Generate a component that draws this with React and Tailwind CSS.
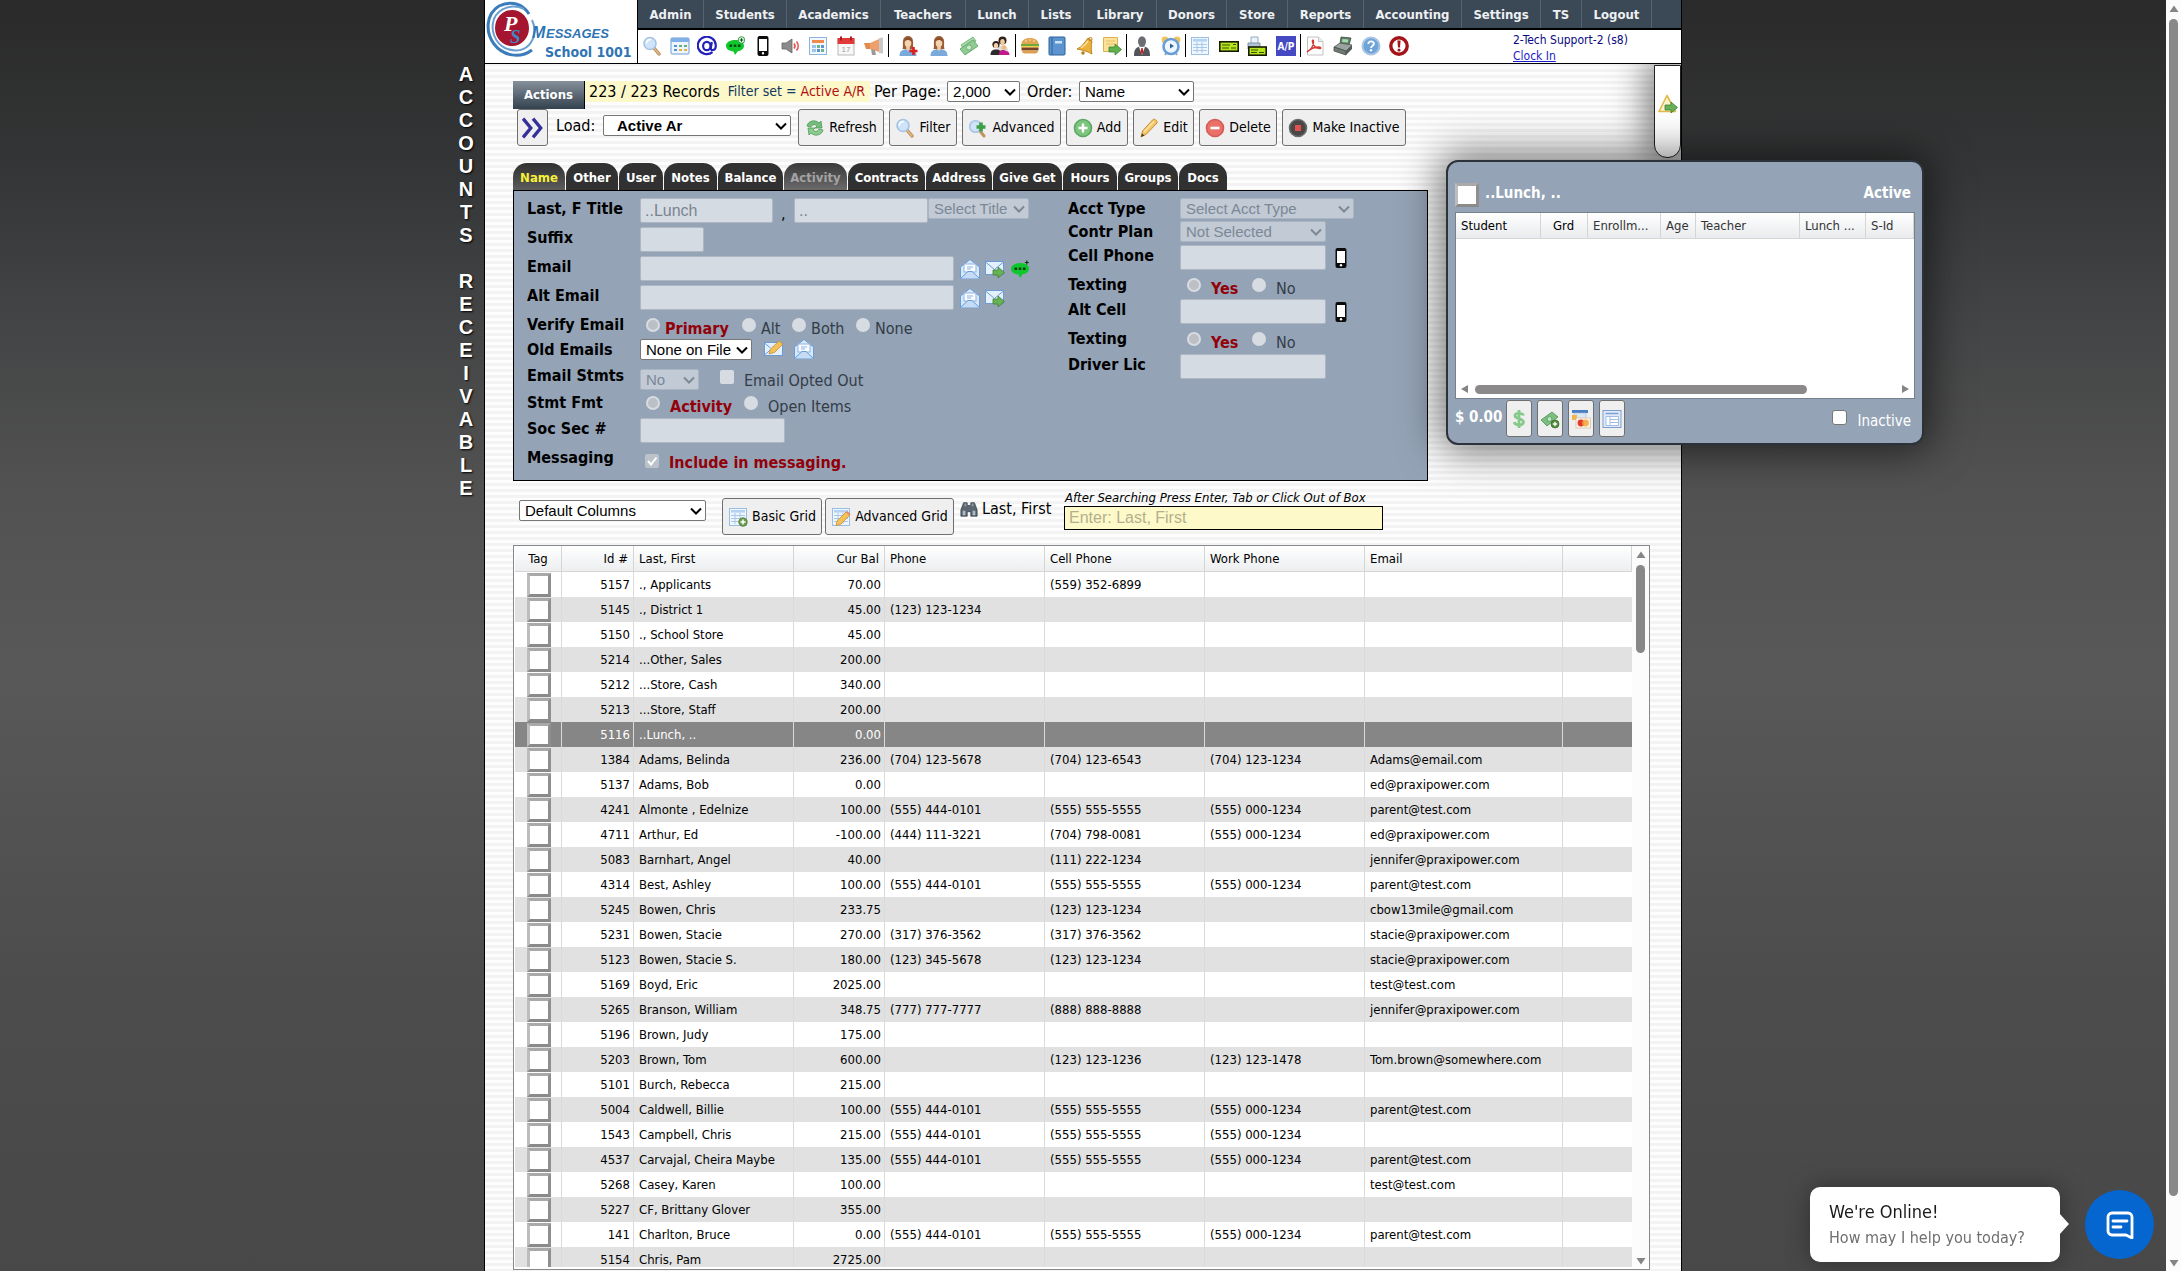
import React from "react";

const FONT = "font-['DejaVu_Sans_Condensed','Open_Sans',sans-serif]";
const ARIAL = "font-['Liberation_Sans',Arial,sans-serif]";

/* ---------- icons, all on a 20 x 20 grid ---------- */
function Ico({ children, className = "size-5" }) {
  return (
    <svg viewBox="0 0 20 20" className={"shrink-0 " + className} aria-hidden="true">
      {children}
    </svg>
  );
}
const Magnifier = (p) => (
  <Ico {...p}>
    <path d="M12 12l5 6" stroke="#b98a56" strokeWidth="3.4" strokeLinecap="round" />
    <path d="M12 12l5 6" stroke="#e0bd8c" strokeWidth="1.4" strokeLinecap="round" />
    <circle cx="8" cy="7.5" r="6" fill="#cfe4f8" stroke="#a6c3e4" strokeWidth="1.6" />
    <path d="M4.5 7a4 4 0 0 1 4-3.5" stroke="#fff" strokeWidth="1.6" fill="none" strokeLinecap="round" />
  </Ico>
);
const Calc = () => (
  <Ico>
    <rect x="1" y="2" width="18" height="16" rx="1" fill="#eef5fd" stroke="#6d9bd4" />
    <rect x="1" y="2" width="18" height="4" fill="#7fb0e6" />
    <path d="M4 9h3v2H4zM4 13h3v2H4z" fill="#4e93d9" />
    <path d="M9 9h3v2H9zM14 9h3v2h-3z" fill="#62b07a" />
    <path d="M9 13h3v2H9zM14 13h3v2h-3z" fill="#e6b04b" />
  </Ico>
);
const At = () => (
  <Ico>
    <path d="M15.5 16.2A9 8.7 0 1 1 18.8 9.5c0 3-1.4 4.6-3.2 4.6-1.600 0-2-1-1.700-2.600L14.800 6" fill="none" stroke="#2222b8" strokeWidth="2.200" />
    <ellipse cx="9.800" cy="10" rx="3.700" ry="4.200" fill="none" stroke="#2222b8" strokeWidth="2.200" />
  </Ico>
);
const ChatPlus = () => (
  <Ico>
    <path d="M10 4c5 0 9 2.200 9 5.700s-3.400 5-6 5.400L10 19l-1.500-3.600C4 15 1 13 1 9.700S5 4 10 4z" fill="#10c82c" />
    <path d="M4.500 8.500h2.600v2.600H4.500zM8.700 8.500h2.600v2.600H8.700zM12.900 8.500h2.600v2.600h-2.600z" fill="#064a10" />
    <circle cx="16.500" cy="4" r="3.300" fill="#d9f3dd" stroke="#128a27" strokeWidth=".8" />
    <path d="M16.500 2.300v3.400M14.800 4h3.400" stroke="#064a10" />
  </Ico>
);
const ChatDark = () => (
  <Ico>
    <path d="M10 4c5 0 9 2.200 9 5.700s-3.400 5-6 5.400L10 19l-1.500-3.600C4 15 1 13 1 9.700S5 4 10 4z" fill="#0fc62c" />
    <path d="M4.500 8.500h2.600v2.600H4.500zM8.700 8.500h2.600v2.600H8.700zM12.900 8.500h2.600v2.600h-2.600z" fill="#063d0e" />
    <path d="M16.800 1.500v4M14.800 3.500h4" stroke="#0b3b12" strokeWidth="1.200" />
  </Ico>
);
const Phone = (p) => (
  <Ico {...p}>
    <rect x="4.500" y="0" width="11" height="20" rx="2" fill="#0b0b0b" />
    <rect x="6" y="3" width="8" height="12" fill="#fff" />
    <circle cx="10" cy="17.300" r="1.200" fill="#fff" />
  </Ico>
);
const Speaker = () => (
  <Ico>
    <path d="M1 7h4l6-4v14l-6-4H1z" fill="#8b8b8b" stroke="#666" strokeWidth=".8" />
    <path d="M13 7.500a4 4 0 0 1 0 5M15.500 5.500a7 7 0 0 1 0 9" stroke="#e45555" strokeWidth="1.700" fill="none" />
  </Ico>
);
const CalSheet = () => (
  <Ico>
    <rect x="1.500" y="1.500" width="17" height="17" fill="#f2f8ff" stroke="#8db4de" />
    <rect x="4" y="4" width="12" height="3" fill="#f08a4b" />
    <path d="M4 9h4v3H4zM4 13h4v3H4z" fill="#9cc3ec" />
    <path d="M9 9h3v3H9zM13 13h3v3h-3z" fill="#6cb48c" />
    <path d="M13 9h3v3h-3zM9 13h3v3H9z" fill="#5c92cf" />
  </Ico>
);
const CalRed = () => (
  <Ico>
    <rect x="2" y="3" width="16" height="16" fill="#f7f7f7" stroke="#b9b9b9" />
    <rect x="1.500" y="2" width="17" height="6" fill="#e03a3a" />
    <path d="M5 .5v4M15 .5v4" stroke="#a51f1f" strokeWidth="2" />
    <text x="10" y="16" fontSize="8" textAnchor="middle" fill="#a2a2a2" fontFamily="Liberation Sans">17</text>
  </Ico>
);
const Megaphone = () => (
  <Ico>
    <path d="M0 7h6v6H2z" fill="#e38b4d" />
    <path d="M6 7l9-4v13l-9-3z" fill="#eda06c" />
    <path d="M15 2l4-.5v16l-4-.5z" fill="#c9c9c9" />
    <path d="M7 13l1 6h4l-1-5z" fill="#9a9a9a" />
  </Ico>
);
const Woman = ({ plus }) => (
  <Ico>
    <path d="M4.500 13c1-3 0-5 .5-8a5 5 0 0 1 10 0c.5 3-.5 5 .5 8z" fill="#9a5d36" />
    <path d="M1.500 20c0-5 3-7 8.500-7s8.500 2 8.500 7z" fill="#7aa9dc" />
    <path d="M8.200 10h3.600v3.500L10 15l-1.800-1.500z" fill="#f2c9a2" />
    <ellipse cx="10" cy="7" rx="3.300" ry="4" fill="#f6d3b0" />
    <path d="M6.500 6c1-2.500 5-3 7 0l-.3-3.200-3.200-1.300-3.300 1.500z" fill="#8a4f2b" />
    {plus && <path d="M15.500 11v8M11.500 15h8" stroke="#e01d1d" strokeWidth="2.600" />}
  </Ico>
);
const Money = (p) => (
  <Ico {...p}>
    <path d="M2 9l12-8 3 4-12 8z" fill="#a9d9a9" stroke="#5ea868" strokeWidth=".8" />
    <path d="M1 13l13-9 5 6-13 9z" fill="#8fcb93" stroke="#559e60" strokeWidth=".8" />
    <circle cx="10" cy="11.500" r="2.600" fill="#c9ebca" stroke="#559e60" strokeWidth=".7" />
  </Ico>
);
const MoneyPlus = () => (
  <Ico className="size-5">
    <path d="M1 11l11-8 6 5-11 9z" fill="#7bbf80" stroke="#4c8f56" strokeWidth=".8" />
    <circle cx="9.500" cy="10" r="2.400" fill="#c0e6c2" stroke="#4c8f56" strokeWidth=".7" />
    <circle cx="15" cy="15" r="4" fill="#4f8a3a" stroke="#386a28" strokeWidth=".7" />
    <path d="M15 12.800v4.400M12.800 15h4.400" stroke="#fff" strokeWidth="1.300" />
  </Ico>
);
const People = () => (
  <Ico>
    <circle cx="12.500" cy="4.500" r="4" fill="#2d2019" />
    <ellipse cx="12.500" cy="6" rx="2.300" ry="3" fill="#f1caa2" />
    <path d="M7 15c0-4 2-5.500 5.500-5.500S18 11 18 15z" fill="#ddd" />
    <circle cx="6" cy="8.500" r="3.600" fill="#2d2019" />
    <ellipse cx="6" cy="9.800" rx="2.200" ry="2.700" fill="#f4d0aa" />
    <path d="M.5 19c0-4 2-5.500 5.500-5.500s5.500 1.500 5.500 5.500z" fill="#2b2b2b" />
    <path d="M9 19c0-3.500 1-5 4-5 1.500 0 2.500.5 3 1 2 0 3.500 1.500 3.500 4z" fill="#c01a8c" />
    <circle cx="14" cy="11.500" r="2.300" fill="#f1b978" />
  </Ico>
);
const Burger = () => (
  <Ico>
    <path d="M1.500 8c0-4 4-6 8.500-6s8.500 2 8.500 6z" fill="#e2a552" />
    <path d="M5 5h2M9 4h2M13 5h2" stroke="#fbe3b4" />
    <path d="M1 8h18v2H1z" fill="#71a83a" />
    <path d="M1 10h18v1.600H1z" fill="#f3cf4c" />
    <path d="M1.500 11.500h17v3h-17z" fill="#7a4325" />
    <path d="M2 14.500h16c0 2-1 3-3 3H5c-2 0-3-1-3-3z" fill="#dca050" />
  </Ico>
);
const Book = () => (
  <Ico>
    <rect x="2" y="1" width="16" height="18" rx="1" fill="#5b94cf" stroke="#2f629a" />
    <path d="M5 1v18" stroke="#2f629a" />
    <path d="M8 5h7v2.500H8z" fill="#cfe3f7" />
  </Ico>
);
const Bell = () => (
  <Ico>
    <path d="M2 13c5-2 7-6 11-11l4 3c-1 5-1 9 0 13-5-3-10-4-15-5z" fill="#ecb03c" stroke="#b97f19" strokeWidth=".9" />
    <path d="M6 12c3-2 5-4 7-7" stroke="#fbe2a0" strokeWidth="1.500" fill="none" />
    <circle cx="8" cy="17" r="1.800" fill="#b97f19" />
    <circle cx="15.500" cy="3" r="1.600" fill="none" stroke="#b97f19" />
  </Ico>
);
const NoteArrow = () => (
  <Ico>
    <path d="M1.500 1.500h14v14h-14z" fill="#fbe19a" stroke="#deb24c" />
    <path d="M4 5h9M4 8h9" stroke="#e5bf68" />
    <path d="M7 11h6V8l6.500 5.500L13 19v-3H7z" fill="#5fb14d" stroke="#388030" strokeWidth=".8" />
  </Ico>
);
const Man = () => (
  <Ico>
    <path d="M2 20c0-7 2-9.500 8-9.500s8 2.500 8 9.500z" fill="#515459" />
    <path d="M7 11h6l-3 8z" fill="#fff" />
    <path d="M9.300 12h1.400l.8 4-1.500 2.500L8.500 16z" fill="#c52323" />
    <ellipse cx="10" cy="5.500" rx="4" ry="5.200" fill="#6a6d72" />
  </Ico>
);
const Alarm = () => (
  <Ico>
    <circle cx="4" cy="4" r="3.400" fill="#f0c45c" />
    <circle cx="16" cy="4" r="3.400" fill="#f0c45c" />
    <path d="M4 19l2-3M16 19l-2-3" stroke="#8aa5c4" strokeWidth="2" />
    <circle cx="10" cy="10.500" r="7.500" fill="#eef6ff" stroke="#679dd8" strokeWidth="2.600" />
    <path d="M9 7.500v5l4-2.500z" fill="#33608f" />
  </Ico>
);
const Sheet = ({ badge, className }) => (
  <Ico className={className}>
    <rect x="1.500" y="1.500" width="17" height="17" fill="#eef6ff" stroke="#9abde4" />
    <rect x="3" y="3" width="14" height="2.600" fill="#b5d2f2" />
    <path d="M3 8.500h14M3 11.500h14M3 14.500h14M7 6v11M12 6v11" stroke="#a8c7e9" />
    {badge === "plus" && (
      <>
        <circle cx="15" cy="15" r="4.200" fill="#6d9f4e" stroke="#44702c" strokeWidth=".8" />
        <path d="M15 12.500v5M12.500 15h5" stroke="#fff" strokeWidth="1.500" />
      </>
    )}
    {badge === "pencil" && (
      <>
        <path d="M5 18.500l1-4.500 9-9 3.500 3.500-9 9z" fill="#f3c05a" stroke="#cf8f2d" strokeWidth=".8" />
        <path d="M15 5l3.500 3.500 1-1.500-3-3z" fill="#e08a78" />
      </>
    )}
  </Ico>
);
const Check = () => (
  <Ico>
    <rect x=".8" y="5.800" width="18.400" height="9.400" fill="#b4e51d" stroke="#151a05" strokeWidth="1.600" />
    <path d="M3 9h8M3 12h7M12 12h5M14 8.500h3" stroke="#3d5208" strokeWidth="1.200" />
  </Ico>
);
const CheckPrint = () => (
  <Ico>
    <path d="M4 1h7v7H4z" fill="#eef3fa" stroke="#92a8c2" />
    <path d="M1 7h12v6H1z" fill="#b3c2d4" stroke="#8093ab" />
    <rect x="1.800" y="11" width="17.400" height="8.200" fill="#b4e51d" stroke="#151a05" strokeWidth="1.600" />
    <path d="M4 14h7M4 16.500h6M12 16.500h5" stroke="#3d5208" strokeWidth="1.200" />
  </Ico>
);
const AP = () => (
  <Ico>
    <rect width="20" height="20" fill="#4549c4" />
    <text x="10" y="14" fontSize="10" fontWeight="bold" textAnchor="middle" fill="#fff" fontFamily="DejaVu Sans Condensed">A/P</text>
  </Ico>
);
const Pdf = () => (
  <Ico>
    <path d="M2.500 1h11l4.500 4.500V19H2.500z" fill="#fdfdfd" stroke="#c3c3c3" />
    <path d="M13.500 1v4.500H18" fill="#eee" stroke="#c3c3c3" />
    <path d="M2 16c4-2 7-7 6.500-11-.2-1.500-1.500-1-1 1 .8 3.500 3.500 6.500 7.500 6.500 1.500-.2.500-1.500-1-1.500-4 0-9 2-12 5z" fill="none" stroke="#d23a34" strokeWidth="1.400" />
  </Ico>
);
const Cash = () => (
  <Ico>
    <path d="M8 1l10 1-2 7-9-1z" fill="#5d7a66" stroke="#3c4f43" strokeWidth=".8" />
    <path d="M9.500 3l6 .6-.7 3L9 6z" fill="#a7dcb0" />
    <path d="M1 11l6-4 12 2-6 6z" fill="#9aa39d" stroke="#4f5a53" strokeWidth=".8" />
    <path d="M1 11l12 4v4L1 15z" fill="#6f7a74" stroke="#454f49" strokeWidth=".8" />
    <path d="M13 15l6-6v4l-6 6z" fill="#525b56" />
  </Ico>
);
const Help = () => (
  <Ico>
    <circle cx="10" cy="10" r="8.500" fill="#6ea4da" stroke="#a8c4e2" strokeWidth="2" />
    <path d="M7.300 8c0-3.500 5.600-3.300 5.600-.3 0 2-2.800 2-2.800 4.200" stroke="#fff" strokeWidth="1.800" fill="none" />
    <circle cx="10" cy="14.300" r="1.200" fill="#fff" />
  </Ico>
);
const Alert = () => (
  <Ico>
    <circle cx="10" cy="10" r="8.200" fill="#fff" stroke="#a3151b" strokeWidth="3.400" />
    <path d="M8.400 4.500h3.200l-.6 7H9z" fill="#a3151b" />
    <circle cx="10" cy="14" r="1.600" fill="#a3151b" />
  </Ico>
);
const RefreshIco = () => (
  <Ico className="size-5">
    <path d="M2 8c1-5 8-7 12-3l2-2 1 7h-7l2-2c-2-2-5-1.500-6 1z" fill="#74bd7a" stroke="#4c9a56" strokeWidth=".8" />
    <path d="M18 12c-1 5-8 7-12 3l-2 2-1-7h7l-2 2c2 2 5 1.500 6-1z" fill="#8cca8f" stroke="#4c9a56" strokeWidth=".8" />
  </Ico>
);
const AdvIco = () => (
  <Ico className="size-5">
    <path d="M12 13l4 5" stroke="#c1935c" strokeWidth="3" strokeLinecap="round" />
    <circle cx="7.500" cy="8.500" r="5.800" fill="#cfe4f8" stroke="#a6c3e4" strokeWidth="1.500" />
    <path d="M13 4.500v9M8.500 9h9" stroke="#3f9f48" strokeWidth="3.600" />
  </Ico>
);
const Round = ({ fill, edge, children }) => (
  <Ico className="size-5">
    <circle cx="10" cy="10" r="8.500" fill={fill} stroke={edge} strokeWidth="1.600" />
    {children}
  </Ico>
);
const Pencil = () => (
  <Ico className="size-5">
    <path d="M2 19l1.500-6L14 1.500c1.500-1.200 5 1.500 4 3.500L7.500 16z" fill="#f4c565" stroke="#c98f35" />
    <path d="M2 19l1-3.500 2.500 2z" fill="#4a3a20" />
    <path d="M5 14L15 3.500" stroke="#fbe5ae" strokeWidth="1.400" />
  </Ico>
);
const MailOpen = () => (
  <Ico className="size-5">
    <path d="M.5 8L10 .5 19.500 8v11.500H.5z" fill="#d7e8fb" stroke="#6b9cd6" />
    <rect x="4" y="5" width="12" height="8" fill="#f8fbff" stroke="#8fb3dd" />
    <path d="M7 8h6M7 10h4" stroke="#8fb3dd" />
    <path d="M.5 19.500L8 12.500h4l7.500 7" fill="#c5dcf7" stroke="#6b9cd6" />
  </Ico>
);
const MailArrow = () => (
  <Ico className="size-5">
    <rect x=".5" y="2.500" width="18" height="13" fill="#e5f0fd" stroke="#6b9cd6" />
    <path d="M.5 3l9 7.500L18.500 3" fill="none" stroke="#6b9cd6" />
    <path d="M8 11h5V8l6.500 5.500L13 19v-3H8z" fill="#69b157" stroke="#3d8233" strokeWidth=".8" />
  </Ico>
);
const MailPencil = () => (
  <Ico className="size-5">
    <rect x=".5" y="3.500" width="18" height="13" fill="#e5f0fd" stroke="#6b9cd6" />
    <path d="M.5 16l7-6M.5 4l6 5" fill="none" stroke="#6b9cd6" />
    <path d="M5 15l1.500-5L15 2l4 3-8.500 8.500z" fill="#f3c05a" stroke="#c98d33" strokeWidth=".8" />
  </Ico>
);
const Binoculars = () => (
  <Ico className="size-[18px]">
    <path d="M4 3h4v3h4V3h4l3 8v7h-7v-5H8v5H1v-7z" fill="#5b6670" stroke="#2f3840" strokeWidth=".8" />
    <path d="M3 12h3v5H3zM14 12h3v5h-3z" fill="#aebbc7" />
    <path d="M5 4h2v3H5zM13 4h2v3h-2z" fill="#8f9ca8" />
  </Ico>
);
const Dollar = () => (
  <Ico className="size-5">
    <path d="M14.500 6.500C14 4 6 3 6 6.800c0 3.700 8.500 2.200 8.500 6.200 0 4-8.500 3.800-9.300 0M10 1v18" fill="none" stroke="#86c98b" strokeWidth="2.800" />
  </Ico>
);
const Cards = () => (
  <Ico className="size-5">
    <path d="M1 1h16v3H1z" fill="#4a7fc4" />
    <path d="M3 4h12v6H3z" fill="#dbe7f5" stroke="#9db7d6" strokeWidth=".6" />
    <path d="M1 6h5v5H1z" fill="#f0b54a" />
    <rect x="5" y="9" width="14.500" height="10" fill="#fdf3e6" stroke="#d9b9a0" strokeWidth=".7" />
    <circle cx="10" cy="14" r="3.400" fill="#e0382f" />
    <circle cx="14.500" cy="14" r="3.400" fill="#f4a33a" fillOpacity=".85" />
  </Ico>
);
const SheetBlue = () => (
  <Ico className="size-5">
    <rect x="1" y="1.500" width="18" height="17" fill="#dfeaf9" stroke="#7d9fd2" />
    <path d="M3.500 4.500h13" stroke="#7d9fd2" strokeWidth="1.500" />
    <path d="M4 7.500h12.500v9H4zM8 7.500v9M8 10.500h8.500M8 13.500h8.500" fill="#fff" stroke="#a3bce2" />
  </Ico>
);
const Warn = () => (
  <Ico className="size-5">
    <path d="M9 1.500l8.500 16H1z" fill="#fdf3cf" stroke="#e3b94a" strokeWidth="1.600" strokeLinejoin="round" />
    <path d="M7 11h6V8l6.500 5.500L13 19v-3H7z" fill="#69b157" stroke="#3d8233" strokeWidth=".8" />
  </Ico>
);
const Chevron = ({ className }) => (
  <svg viewBox="0 0 12 8" className={"pointer-events-none absolute right-1 top-1/2 h-2 w-3 -translate-y-1/2 " + className} aria-hidden="true">
    <path d="M1 1.500l5 5 5-5" fill="none" stroke="currentColor" strokeWidth="2" />
  </svg>
);
const Tri = ({ d, className }) => (
  <svg viewBox="0 0 10 8" className={"fill-[#858585] " + className} aria-hidden="true">
    <path d={d} />
  </svg>
);
const UP = "M5 0.500L9.500 7H0.500z";
const DOWN = "M5 7.500L9.500 1H0.500z";

/* ---------- small controls ---------- */
function Select({ label, value, width, disabled, bold, className = "" }) {
  return (
    <span className={"relative inline-block shrink-0 " + width + " " + className}>
      <select
        aria-label={label}
        disabled={disabled}
        defaultValue={value}
        className={
          "block h-[21px] w-full appearance-none rounded-[2px] border text-[15px] leading-[18px] " +
          ARIAL +
          (disabled ? " border-[#a9b5c2] bg-[#c1cad5] text-[#7b8896] opacity-100" : " border-[#767676] bg-white text-black") +
          (bold ? " pl-[13px] font-bold" : " pl-[5px]")
        }
      >
        <option>{value}</option>
      </select>
      <Chevron className={disabled ? "text-[#7b8896]" : "text-black"} />
    </span>
  );
}
function Field({ id, width, value = "" }) {
  return (
    <input
      id={id}
      aria-label={id}
      type="text"
      disabled
      defaultValue={value}
      className={"h-[25px] shrink-0 rounded-[2px] border border-[#aeb7c3] bg-[#d5dbe2] px-1 text-base text-[#7b8490] " + ARIAL + " " + width}
    />
  );
}
function Radio({ name, label, on, width, gap = "gap-[5px]", red }) {
  return (
    <label className={"flex h-[26px] shrink-0 items-center " + gap + " " + width}>
      <input
        type="radio"
        name={name}
        disabled
        defaultChecked={on}
        className="mb-1 size-[14px] shrink-0 appearance-none rounded-full border-2 border-[#d7dce3] bg-[#d7dce3] checked:bg-[#bcbfc4]"
      />
      <span className={"whitespace-nowrap pt-1 text-base " + (red ? "font-bold text-[#930009]" : "text-[#333c47]")}>{label}</span>
    </label>
  );
}
function Row({ label, htmlFor, h, children, w = "w-[113px]" }) {
  return (
    <div className={"flex items-start " + h}>
      <label htmlFor={htmlFor} className={"shrink-0 whitespace-nowrap text-base font-bold leading-[22px] text-black " + w}>
        {label}
      </label>
      {children}
    </div>
  );
}
function Btn({ icon, children, width }) {
  return (
    <button
      type="button"
      className={"flex h-[37px] shrink-0 items-center justify-center gap-1 rounded-[3px] border border-[#6f6f6f] bg-[#efefef] text-[14px] text-black " + width}
    >
      {icon}
      {children && <span className="whitespace-nowrap">{children}</span>}
    </button>
  );
}
const TagBox = ({ label }) => (
  <input
    type="checkbox"
    aria-label={label}
    className="block size-6 appearance-none border-[3px] border-t-[#a9a9a9] border-r-[#8f8f8f] border-b-[#8a8a8a] border-l-[#bdbdbd] bg-white"
  />
);

/* ---------- data ---------- */
const NAV = [
  ["Admin", "w-[66px]"], ["Students", "w-[83px]"], ["Academics", "w-[94px]"], ["Teachers", "w-[85px]"],
  ["Lunch", "w-[63px]"], ["Lists", "w-[55px]"], ["Library", "w-[73px]"], ["Donors", "w-[70px]"],
  ["Store", "w-[61px]"], ["Reports", "w-[76px]"], ["Accounting", "w-[98px]"], ["Settings", "w-[79px]"],
  ["TS", "w-[41px]"], ["Logout", "w-[70px]"],
];
const TABS = [
  ["Name", "w-[52px]"], ["Other", "w-[52px]"], ["User", "w-[44px]"], ["Notes", "w-[53px]"],
  ["Balance", "w-[65px]"], ["Activity", "w-[63px]"], ["Contracts", "w-[77px]"], ["Address", "w-[66px]"],
  ["Give Get", "w-[69px]"], ["Hours", "w-[54px]"], ["Groups", "w-[60px]"], ["Docs", "w-[48px]"],
];
const ROWS = [
  ["5157", "., Applicants", "70.00", "", "(559) 352-6899", "", ""],
  ["5145", "., District 1", "45.00", "(123) 123-1234", "", "", ""],
  ["5150", "., School Store", "45.00", "", "", "", ""],
  ["5214", "...Other, Sales", "200.00", "", "", "", ""],
  ["5212", "...Store, Cash", "340.00", "", "", "", ""],
  ["5213", "...Store, Staff", "200.00", "", "", "", ""],
  ["5116", "..Lunch, ..", "0.00", "", "", "", ""],
  ["1384", "Adams, Belinda", "236.00", "(704) 123-5678", "(704) 123-6543", "(704) 123-1234", "Adams@email.com"],
  ["5137", "Adams, Bob", "0.00", "", "", "", "ed@praxipower.com"],
  ["4241", "Almonte , Edelnize", "100.00", "(555) 444-0101", "(555) 555-5555", "(555) 000-1234", "parent@test.com"],
  ["4711", "Arthur, Ed", "-100.00", "(444) 111-3221", "(704) 798-0081", "(555) 000-1234", "ed@praxipower.com"],
  ["5083", "Barnhart, Angel", "40.00", "", "(111) 222-1234", "", "jennifer@praxipower.com"],
  ["4314", "Best, Ashley", "100.00", "(555) 444-0101", "(555) 555-5555", "(555) 000-1234", "parent@test.com"],
  ["5245", "Bowen, Chris", "233.75", "", "(123) 123-1234", "", "cbow13mile@gmail.com"],
  ["5231", "Bowen, Stacie", "270.00", "(317) 376-3562", "(317) 376-3562", "", "stacie@praxipower.com"],
  ["5123", "Bowen, Stacie S.", "180.00", "(123) 345-5678", "(123) 123-1234", "", "stacie@praxipower.com"],
  ["5169", "Boyd, Eric", "2025.00", "", "", "", "test@test.com"],
  ["5265", "Branson, William", "348.75", "(777) 777-7777", "(888) 888-8888", "", "jennifer@praxipower.com"],
  ["5196", "Brown, Judy", "175.00", "", "", "", ""],
  ["5203", "Brown, Tom", "600.00", "", "(123) 123-1236", "(123) 123-1478", "Tom.brown@somewhere.com"],
  ["5101", "Burch, Rebecca", "215.00", "", "", "", ""],
  ["5004", "Caldwell, Billie", "100.00", "(555) 444-0101", "(555) 555-5555", "(555) 000-1234", "parent@test.com"],
  ["1543", "Campbell, Chris", "215.00", "(555) 444-0101", "(555) 555-5555", "(555) 000-1234", ""],
  ["4537", "Carvajal, Cheira Maybe", "135.00", "(555) 444-0101", "(555) 555-5555", "(555) 000-1234", "parent@test.com"],
  ["5268", "Casey, Karen", "100.00", "", "", "", "test@test.com"],
  ["5227", "CF, Brittany Glover", "355.00", "", "", "", ""],
  ["141", "Charlton, Bruce", "0.00", "(555) 444-0101", "(555) 555-5555", "(555) 000-1234", "parent@test.com"],
  ["5154", "Chris, Pam", "2725.00", "", "", "", ""],
];

const Group = ({ className, items }) => (
  <div className={"flex shrink-0 items-center justify-around " + className}>
    {items.map((item, i) => (
      <React.Fragment key={i}>{item}</React.Fragment>
    ))}
  </div>
);
const Bar = () => <span className="h-[23px] w-px shrink-0 bg-black" />;

function Header() {
  return (
    <header className="flex h-16 border-b border-black bg-white">
      <a href="#home" aria-label="PS Messages, School 1001" className="block w-[153px] shrink-0 border-r border-black">
        <svg viewBox="0 0 152 63" className="h-full w-full">
          <ellipse cx="27" cy="28" rx="17" ry="18" fill="#a5152f" />
          <path d="M44 14C38 4 26 0 14 6 1 14 0 32 9 44c9 12 26 15 38 6" fill="none" stroke="#3b7cba" strokeWidth="3" />
          <path d="M39 9C28 4 14 7 9 19c-4 11 1 24 11 29 9 4 18 3 24-3 6-7 7-17 3-25" fill="none" stroke="#6a9fd0" strokeWidth="2" />
          <text x="19" y="31" fontSize="22" fontStyle="italic" fontWeight="bold" fill="#fff" fontFamily="Liberation Serif">P</text>
          <text x="25" y="43" fontSize="19" fontStyle="italic" fontWeight="bold" fill="#3f86c6" fontFamily="Liberation Serif">S</text>
          <g fontFamily="Liberation Sans" fontWeight="bold" fontStyle="italic" fill="#2f74b3">
            <text x="47" y="38" fontSize="16">M</text>
            <text x="61" y="38" fontSize="13">ESSAGES</text>
          </g>
          <text x="60" y="57" fontSize="14" fontWeight="bold" fill="#2f74b3" fontFamily="DejaVu Sans Condensed">School 1001</text>
        </svg>
      </a>
      <div className="min-w-0 flex-1">
        <nav className="flex h-[30px] border-b-2 border-black bg-[#3b4856]">
          {NAV.map(([name, w]) => (
            <a key={name} href={"#" + name} className={"flex shrink-0 items-center justify-center border-r border-[#56636f] pt-px text-[13px] font-bold text-[#eef0f2] " + w}>
              {name}
            </a>
          ))}
        </nav>
        <div className="flex h-[31px] items-center">
          <Group className="w-[250px]" items={[<Magnifier />, <Calc />, <At />, <ChatPlus />, <Phone />, <Speaker />, <CalSheet />, <CalRed />, <Megaphone />]} />
          <Bar />
          <Group className="ml-1 w-[122px]" items={[<Woman plus />, <Woman />, <Money />, <People />]} />
          <Bar />
          <Group className="w-[110px]" items={[<Burger />, <Book />, <Bell />, <NoteArrow />]} />
          <Bar />
          <Group className="w-[58px]" items={[<Man />, <Alarm />]} />
          <Bar />
          <Group className="w-[114px]" items={[<Sheet />, <Check />, <CheckPrint />, <AP />]} />
          <Bar />
          <Group className="w-[112px]" items={[<Pdf />, <Cash />, <Help />, <Alert />]} />
          <div className="ml-auto w-[168px] pt-1 text-[12px] leading-4 text-[#0a0a80]">
            <div>2-Tech Support-2 (s8)</div>
            <a href="#clock" className="text-[#1a1ac8] underline">Clock In</a>
          </div>
        </div>
      </div>
    </header>
  );
}

function Toolbar() {
  return (
    <>
      <div className="flex h-7 items-start text-base">
        <button type="button" className="h-7 w-[72px] shrink-0 border-r border-black bg-linear-to-b from-[#87919b] to-[#34424f] text-[13px] font-bold text-white">
          Actions
        </button>
        <div className="flex h-[21px] w-[285px] shrink-0 items-center gap-2 whitespace-nowrap bg-[#fdf8c9] pl-1">
          <span>223 / 223 Records</span>
          <span className="text-[14px] text-[#10375c]">
            Filter set = <span className="text-[#b00d0d]">Active A/R</span>
          </span>
        </div>
        <span className="w-[77px] shrink-0 pl-1 leading-[21px]">Per Page:</span>
        <Select label="Per Page" value="2,000" width="w-[73px]" />
        <span className="w-[59px] shrink-0 pl-[7px] leading-[21px]">Order:</span>
        <Select label="Order" value="Name" width="w-[115px]" />
      </div>
      <div className="flex h-[37px] items-start gap-[5px] pl-1">
        <button type="button" aria-label="Expand" className="flex h-[37px] w-[31px] shrink-0 items-center justify-center rounded-[3px] border border-[#6f6f6f] bg-[#efefef]">
          <svg viewBox="0 0 20 20" className="size-[22px]" aria-hidden="true">
            <path d="M1 1.500L8 10l-7 8.500M10 1.500l7 8.500-7 8.500" fill="none" stroke="#34309b" strokeWidth="3" />
          </svg>
        </button>
        <span className="w-[45px] shrink-0 pl-[3px] pt-[6px] text-base leading-[22px]">Load:</span>
        <Select label="Load" value="Active Ar" width="w-[188px]" bold className="mt-[6px]" />
        <div className="flex gap-[5px] pl-[2px]">
          <Btn width="w-[86px]" icon={<RefreshIco />}>Refresh</Btn>
          <Btn width="w-[68px]" icon={<Magnifier />}>Filter</Btn>
          <Btn width="w-[99px]" icon={<AdvIco />}>Advanced</Btn>
          <Btn width="w-[62px]" icon={<Round fill="#7cc47f" edge="#5ba860"><path d="M10 5.500v9M5.500 10h9" stroke="#fff" strokeWidth="2.400" /></Round>}>Add</Btn>
          <Btn width="w-[61px]" icon={<Pencil />}>Edit</Btn>
          <Btn width="w-[78px]" icon={<Round fill="#e9716a" edge="#d65a54"><path d="M5.500 10h9" stroke="#fff" strokeWidth="2.600" /></Round>}>Delete</Btn>
          <Btn width="w-[124px]" icon={<Round fill="#4a4747" edge="#6f6b6b"><path d="M7 7h6v6H7z" fill="#e05252" /></Round>}>Make Inactive</Btn>
        </div>
      </div>
    </>
  );
}

function Tabs() {
  return (
    <div role="tablist" className="mt-[17px] flex h-[27px] gap-px">
      {TABS.map(([name, w]) => (
        <button
          key={name}
          type="button"
          role="tab"
          aria-selected={name === "Name"}
          className={
            "shrink-0 rounded-t-[14px] pt-[2px] text-[13px] font-bold " +
            w +
            (name === "Name"
              ? " bg-linear-to-b from-[#303030] to-[#5c5c5c] text-[#f6f03a]"
              : name === "Activity"
              ? " bg-linear-to-b from-[#3a3a3a] to-[#6a6a6a] text-[#a3a3a3]"
              : " bg-[#313131] text-white")
          }
        >
          {name}
        </button>
      ))}
    </div>
  );
}

function Details() {
  return (
    <section className="flex h-[291px] w-[915px] max-w-full border border-black bg-[#94a3b6] pl-[13px] pt-[7px]">
      <div className="w-[541px] shrink-0">
        <Row label="Last, F Title" htmlFor="Last name" h="h-[29px]">
          <Field id="Last name" width="w-[133px]" value="..Lunch" />
          <span className="w-[21px] pl-2 pt-1 text-base">,</span>
          <Field id="First name" width="w-[134px]" value=".." />
          <Select label="Title" value="Select Title" width="w-[101px]" disabled />
        </Row>
        <Row label="Suffix" htmlFor="Suffix" h="h-[29px]"><Field id="Suffix" width="w-[64px]" /></Row>
        <Row label="Email" htmlFor="Email" h="h-[29px]">
          <Field id="Email" width="w-[314px]" />
          <span className="flex gap-[5px] pl-[6px] pt-[3px]"><MailOpen /><MailArrow /><ChatDark /></span>
        </Row>
        <Row label="Alt Email" htmlFor="Alt Email" h="h-[29px]">
          <Field id="Alt Email" width="w-[314px]" />
          <span className="flex gap-[5px] pl-[6px] pt-[3px]"><MailOpen /><MailArrow /></span>
        </Row>
        <Row label="Verify Email" h="h-[25px]">
          <div className="flex pl-[6px]">
            <Radio name="verify" label="Primary" on red width="w-[96px]" />
            <Radio name="verify" label="Alt" width="w-[50px]" />
            <Radio name="verify" label="Both" width="w-[64px]" />
            <Radio name="verify" label="None" width="w-[60px]" />
          </div>
        </Row>
        <Row label="Old Emails" h="h-[26px]">
          <Select label="Old Emails" value="None on File" width="w-[112px]" />
          <span className="flex gap-[10px] pl-3"><MailPencil /><MailOpen /></span>
        </Row>
        <Row label="Email Stmts" h="h-[27px]">
          <Select label="Email Statements" value="No" width="w-[59px]" disabled className="mt-1" />
          <label className="flex items-center gap-[10px] pl-[21px] text-base text-[#333c47]">
            <input type="checkbox" disabled className="mb-1 size-[14px] appearance-none rounded-[2px] bg-[#d7dce3]" />
            <span className="whitespace-nowrap pt-1">Email Opted Out</span>
          </label>
        </Row>
        <Row label="Stmt Fmt" h="h-[26px]">
          <div className="flex pl-[6px]">
            <Radio name="stmt" label="Activity" on red width="w-[98px]" gap="gap-[10px]" />
            <Radio name="stmt" label="Open Items" width="w-[120px]" gap="gap-[10px]" />
          </div>
        </Row>
        <Row label="Soc Sec #" htmlFor="Soc Sec" h="h-[29px]"><Field id="Soc Sec" width="w-[145px]" /></Row>
        <Row label="Messaging" h="h-[29px]">
          <label className="flex items-center gap-[10px] pl-[5px] text-base font-bold text-[#930009]">
            <span className="relative mb-px flex size-[14px]">
              <input type="checkbox" disabled defaultChecked className="size-[14px] appearance-none rounded-[2px] bg-[#bcc2ca]" />
              <svg viewBox="0 0 14 14" className="pointer-events-none absolute inset-0" aria-hidden="true">
                <path d="M3 7l3 3.500L11.500 3.500" fill="none" stroke="#fff" strokeWidth="2" />
              </svg>
            </span>
            <span className="whitespace-nowrap pt-1">Include in messaging.</span>
          </label>
        </Row>
      </div>
      <div className="min-w-0 flex-1">
        <Row w="w-[112px]" label="Acct Type" h="h-[23px]"><Select label="Acct Type" value="Select Acct Type" width="w-[174px]" disabled /></Row>
        <Row w="w-[112px]" label="Contr Plan" h="h-[24px]"><Select label="Contr Plan" value="Not Selected" width="w-[146px]" disabled /></Row>
        <Row w="w-[112px]" label="Cell Phone" htmlFor="Cell Phone" h="h-[29px]">
          <Field id="Cell Phone" width="w-[146px]" />
          <span className="pl-[5px] pt-[3px]"><Phone /></span>
        </Row>
        <Row w="w-[112px]" label="Texting" h="h-[25px]">
          <div className="flex pl-[7px]">
            <Radio name="text1" label="Yes" on red width="w-[65px]" gap="gap-[10px]" />
            <Radio name="text1" label="No" width="w-[60px]" gap="gap-[10px]" />
          </div>
        </Row>
        <Row w="w-[112px]" label="Alt Cell" htmlFor="Alt Cell" h="h-[29px]">
          <Field id="Alt Cell" width="w-[146px]" />
          <span className="pl-[5px] pt-[3px]"><Phone /></span>
        </Row>
        <Row w="w-[112px]" label="Texting" h="h-[26px]">
          <div className="flex pl-[7px]">
            <Radio name="text2" label="Yes" on red width="w-[65px]" gap="gap-[10px]" />
            <Radio name="text2" label="No" width="w-[60px]" gap="gap-[10px]" />
          </div>
        </Row>
        <Row w="w-[112px]" label="Driver Lic" htmlFor="Driver Lic" h="h-[29px]"><Field id="Driver Lic" width="w-[146px]" /></Row>
      </div>
    </section>
  );
}

function GridTools() {
  return (
    <div className="mt-[17px] flex h-[37px] items-start pl-[6px]">
      <Select label="Columns" value="Default Columns" width="w-[187px]" className="mt-[2px]" />
      <div className="flex gap-[3px] pl-4">
        <Btn width="w-[100px]" icon={<Sheet badge="plus" />}>Basic Grid</Btn>
        <Btn width="w-[129px]" icon={<Sheet badge="pencil" />}>Advanced Grid</Btn>
      </div>
      <div className="flex w-[110px] items-center gap-1 pl-[6px] text-base leading-[22px]">
        <Binoculars />
        <label htmlFor="search" className="whitespace-nowrap">Last, First</label>
      </div>
      <div className="flex w-[319px] flex-col">
        <span className="-mt-2 whitespace-nowrap pl-px text-[13px] italic leading-4">After Searching Press Enter, Tab or Click Out of Box</span>
        <input id="search" type="text" placeholder="Enter: Last, First" className={"h-6 w-full border border-black bg-[#fef9c8] px-1 text-base placeholder:text-[#b3b08f] " + ARIAL} />
      </div>
    </div>
  );
}

const HEAD = "border-r border-b border-[#d5d5d5] bg-linear-to-b from-white to-[#eceef0] px-[5px] text-[13px] font-normal";

function Grid() {
  return (
    <section className="mt-[10px] flex min-h-0 flex-1 border border-[#85888c] bg-white pb-[2px]">
      <div className="min-w-0 flex-1 overflow-hidden pl-px">
        <table className="w-full table-fixed border-separate border-spacing-0 text-[13px] leading-4 text-black">
          <colgroup>
            <col className="w-[47px]" /><col className="w-[72px]" /><col className="w-[160px]" /><col className="w-[91px]" />
            <col className="w-[160px]" /><col className="w-[160px]" /><col className="w-[160px]" /><col className="w-[198px]" /><col />
          </colgroup>
          <thead>
            <tr className="h-[26px] whitespace-nowrap">
              <th className={HEAD + " text-center"}>Tag</th>
              <th className={HEAD + " text-right"}>Id #</th>
              <th className={HEAD + " text-left"}>Last, First</th>
              <th className={HEAD + " text-right"}>Cur Bal</th>
              <th className={HEAD + " text-left"}>Phone</th>
              <th className={HEAD + " text-left"}>Cell Phone</th>
              <th className={HEAD + " text-left"}>Work Phone</th>
              <th className={HEAD + " text-left"}>Email</th>
              <th className={HEAD}></th>
            </tr>
          </thead>
          <tbody>
            {ROWS.map((r, i) => {
              const tone = i === 6 ? "bg-[#868686] text-white" : i % 2 ? "bg-[#e1e1e1]" : "bg-white";
              return (
                <tr key={r[0]} className={"h-[25px] whitespace-nowrap " + tone}>
                  <td className="border-r border-[#dadada] p-0 pl-3"><TagBox label={"Tag " + r[1]} /></td>
                  {r.map((cell, c) => (
                    <td key={c} className={"overflow-hidden border-r border-[#dadada] pb-0 pt-px " + (c === 0 || c === 2 ? "px-[3px] text-right" : "px-[5px]")}>
                      {cell}
                    </td>
                  ))}
                  <td></td>
                </tr>
              );
            })}
          </tbody>
        </table>
      </div>
      <div className="flex w-[17px] shrink-0 flex-col items-center bg-[#fcfcfc] pt-[5px]">
        <Tri d={UP} className="h-2 w-[10px]" />
        <div className="mt-[6px] h-[88px] w-[9px] rounded-full bg-[#888]" />
        <Tri d={DOWN} className="mt-auto mb-[2px] h-2 w-[10px]" />
      </div>
    </section>
  );
}

const SUBHEAD = "whitespace-nowrap border-r border-b border-[#d5d5d5] bg-linear-to-b from-white to-[#e9ebee] text-left text-[13px] font-normal";

function StudentCard() {
  return (
    <aside className="absolute left-[961px] top-[160px] z-20 flex h-[285px] w-[478px] flex-col rounded-[12px] border-2 border-[#2b323a] bg-[#94a3b6] px-[7px] text-white shadow-[0_0_40px_6px_rgba(0,0,0,0.55)]">
      <div className="flex h-[50px] items-center gap-[6px] pt-4">
        <TagBox label="Tag card" />
        <span className="pb-1 text-[15px] font-bold">..Lunch, ..</span>
        <span className="ml-auto pr-1 pb-1 text-[15px] font-bold">Active</span>
      </div>
      <div className="flex h-[187px] flex-col border border-[#76818e] bg-white">
        <table className="w-full table-fixed border-separate border-spacing-0">
          <colgroup>
            <col className="w-[85px]" /><col className="w-[47px]" /><col className="w-[73px]" /><col className="w-[35px]" />
            <col className="w-[104px]" /><col className="w-[66px]" /><col />
          </colgroup>
          <thead>
            <tr className="h-[26px] text-[#333]">
              <th className={SUBHEAD + " px-[5px] text-black"}>Student</th>
              <th className={SUBHEAD + " pl-3 text-black"}>Grd</th>
              <th className={SUBHEAD + " pl-[5px]"}>Enrollm...</th>
              <th className={SUBHEAD + " pl-[5px]"}>Age</th>
              <th className={SUBHEAD + " pl-[5px]"}>Teacher</th>
              <th className={SUBHEAD + " pl-[5px]"}>Lunch ...</th>
              <th className={SUBHEAD + " pl-[5px]"}>S-Id</th>
            </tr>
          </thead>
        </table>
        <div className="mt-auto flex h-[18px] items-center pl-1 pr-1">
          <Tri d="M1 4L8 0v8z" className="h-2 w-[10px]" />
          <div className="ml-[5px] h-[9px] w-[332px] rounded-full bg-[#8b8989]" />
          <Tri d="M9 4L2 0v8z" className="ml-auto h-2 w-[10px]" />
        </div>
      </div>
      <div className="flex items-start gap-[5px] pt-px">
        <span className="w-[46px] pt-[6px] text-[15px] font-bold whitespace-nowrap">$ 0.00</span>
        <Btn width="w-[26px]" icon={<Dollar />} />
        <Btn width="w-[26px]" icon={<MoneyPlus />} />
        <Btn width="w-[26px]" icon={<Cards />} />
        <Btn width="w-[26px]" icon={<SheetBlue />} />
        <label className="ml-auto flex items-start gap-[10px] pr-1 pt-[10px] text-[15px]">
          <input type="checkbox" className="size-[15px] appearance-none rounded-[3px] border border-[#767676] bg-white" />
          <span className="leading-[22px]">Inactive</span>
        </label>
      </div>
    </aside>
  );
}

function Chat() {
  return (
    <div className="fixed right-[27px] bottom-[9px] z-30 flex items-center gap-[25px]">
      <div className="relative h-[75px] w-[250px] rounded-[10px] bg-white pt-[11px] pl-[19px] shadow-[0_0_24px_rgba(0,0,0,0.35)]">
        <div className="text-[18px] leading-[27px] text-[#1a1a1a]">We&apos;re Online!</div>
        <div className="text-base leading-[26px] text-[#6f6f6f]">How may I help you today?</div>
        <svg viewBox="0 0 10 22" className="absolute -right-[9px] top-[26px] h-[22px] w-[10px]" aria-hidden="true">
          <path d="M0 0l10 11L0 22z" fill="#fff" />
        </svg>
      </div>
      <button type="button" aria-label="Open chat" className="flex size-[69px] items-center justify-center rounded-full bg-[#0566d0]">
        <svg viewBox="0 0 28 28" className="size-7" aria-hidden="true">
          <path d="M26 27l-6-3H6a4 4 0 0 1-4-4V6a4 4 0 0 1 4-4h16a4 4 0 0 1 4 4z" fill="none" stroke="#fff" strokeWidth="2.800" strokeLinejoin="round" />
          <path d="M7 10h14M7 16h8" stroke="#fff" strokeWidth="2.800" strokeLinecap="round" />
        </svg>
      </button>
    </div>
  );
}

export default function App() {
  return (
    <div className={"flex h-screen overflow-hidden bg-[linear-gradient(#2a2a2a_0%,#343536_13%,#434445_25%,#525252_39%,#585858_53%,#4c4c4c_78%,#484848_100%)] text-black " + FONT}>
      <div className="flex min-w-0 flex-1 justify-end">
        <h1 aria-label="Accounts Receivable" className={"mt-[63px] mr-[9px] flex w-[18px] flex-col text-center text-[20px] font-bold leading-[23px] text-white [text-shadow:1px_1px_2px_#000] " + ARIAL}>
          {"ACCOUNTS RECEIVABLE".split("").map((c, i) => (
            <span key={i} className="h-[23px]">{c}</span>
          ))}
        </h1>
      </div>
      <main className="relative flex w-[1198px] max-w-full flex-col border-x border-black bg-[repeating-linear-gradient(#fdfdfd_0px,#fdfdfd_3px,#f3f3f3_3px,#f3f3f3_6px)]">
        <Header />
        <div className="flex min-h-0 flex-1 flex-col pt-[17px] pr-[31px] pb-px pl-7">
          <Toolbar />
          <Tabs />
          <Details />
          <GridTools />
          <Grid />
        </div>
        <div className="pointer-events-none absolute inset-x-0 top-16 bottom-0 overflow-hidden">
          <div className="absolute top-px right-0 z-10 flex h-[93px] w-[27px] items-center justify-center rounded-b-[13px] border border-[#222] bg-white pb-4 shadow-[0_0_36px_6px_rgba(0,0,0,0.55)]">
            <Warn />
          </div>
        </div>
        <StudentCard />
      </main>
      <div className="min-w-0 flex-1" />
      <div className="flex w-[15px] shrink-0 flex-col items-center bg-[#fcfcfc] pt-[5px]">
        <Tri d={UP} className="h-2 w-[10px]" />
        <div className="mt-[6px] h-[1184px] max-h-[93%] w-[9px] rounded-full bg-[#888]" />
        <Tri d={DOWN} className="mt-auto mb-1 h-2 w-[10px]" />
      </div>
      <Chat />
    </div>
  );
}
